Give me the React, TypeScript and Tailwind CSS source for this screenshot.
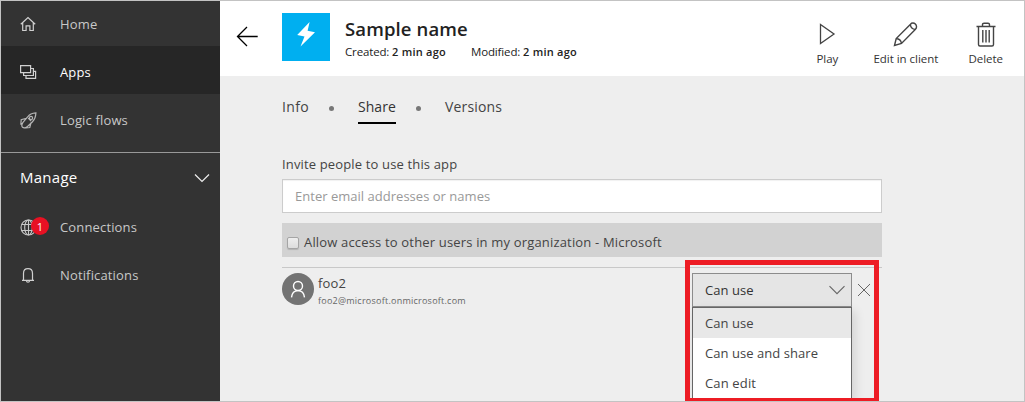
import type { ReactNode } from 'react';

function NavItem({ icon, label, className }: { icon: ReactNode; label: string; className: string }) {
  return (
    <a className={`flex shrink-0 items-center pl-[19px] ${className}`}>
      <span className="relative flex h-[18px] w-10 items-center">{icon}</span>
      <span>{label}</span>
    </a>
  );
}

const HomeIcon = () => (
  <svg width="16" height="16" viewBox="0 0 16 16" fill="none" stroke="#d0d0d0" strokeWidth="1.2">
    <path d="M.8 8.3 8 1.5l7.2 6.8M2.7 7v7.5h3.4V9.8h3.8v4.7h3.4V7" />
  </svg>
);

const AppsIcon = () => (
  <svg width="17" height="16" viewBox="0 0 17 16" fill="none" stroke="#d0d0d0" strokeWidth="1.2">
    <path d="M.6 1.6h10v7H.6zM3.6 8.8v2.7h9.8V4.5h-2.6M6 11.6v2.8h9.6V7.3h-2.2" />
  </svg>
);

const RocketIcon = () => (
  <svg width="17" height="17" viewBox="0 0 17 17" fill="none" stroke="#b5b5b5" strokeWidth="1.2">
    <path d="M15.900.900c-3.800.200-6.500 1.500-8.300 4.100L3 10.300c-1.200 1.800-1.400 4-.4 5 1.100 1 3.200.500 4.900-.8l5-4.800c2.300-2.200 3.200-4.800 3.400-8.800ZM6.500 6.200 1.200 7.800.900 12l1.700-.500M11 10.900l-1.200 4.600-4.200.400" />
    <circle cx="11" cy="5.900" r="1.600" />
    <path d="m8.200 6 2.900 3" />
  </svg>
);

const GlobeIcon = () => (
  <svg width="17" height="17" viewBox="0 0 17 17" fill="none" stroke="#c6c6c6" strokeWidth="1.100">
    <circle cx="8.500" cy="8.500" r="7.500" />
    <ellipse cx="8.500" cy="8.500" rx="3.800" ry="7.500" />
    <path d="M8.500 1v15M1.800 5.500h13.400M1.800 11.500h13.400" />
  </svg>
);

const BellIcon = () => (
  <svg width="16" height="17" viewBox="0 0 16 17" fill="none" stroke="#d0d0d0" strokeWidth="1.200">
    <path d="M2 13.300h12M3.500 13.300V6.500C3.500 3.500 5.200 1.700 8 1.700s4.500 1.800 4.500 4.800v6.800M6.300 13.500c.2 1.100.8 1.700 1.700 1.700s1.500-.6 1.700-1.700" />
  </svg>
);

function Action({ icon, label, className }: { icon: ReactNode; label: string; className: string }) {
  return (
    <button className={`flex flex-col items-center text-[11.500px] leading-4 tracking-[-0.020px] text-[#333] ${className}`}>
      <span className="flex h-[32px] items-center pb-[2px]">{icon}</span>
      <span className="whitespace-nowrap">{label}</span>
    </button>
  );
}

export default function App() {
  return (
    <div className="flex h-[402px] w-[1025px] overflow-hidden border border-[#c3c3c3] bg-[#eee] font-['Open_Sans','Noto_Sans',sans-serif] text-[13px] leading-5 tracking-[0.150px] text-[#444]">
      <nav className="flex w-[219px] shrink-0 flex-col bg-[#333] text-[#c8c8c8]">
        <NavItem icon={<HomeIcon />} label="Home" className="h-[45px] pt-px" />
        <NavItem icon={<AppsIcon />} label="Apps" className="h-12 bg-[#262626] pt-1 text-white" />
        <NavItem icon={<RocketIcon />} label="Logic flows" className="h-12 pt-1" />
        <div className="mt-[10px] flex h-[51px] shrink-0 items-center justify-between border-t border-[#999] pr-[10px] pb-[2px] pl-[19px] text-[15px] text-white">
          <span className="tracking-[0.260px]">Manage</span>
          <svg className="mt-[2px]" width="16" height="10" viewBox="0 0 16 10" fill="none" stroke="#eee" strokeWidth="1.200">
            <path d="m1 1.500 7 7 7-7" />
          </svg>
        </div>
        <NavItem
          icon={
            <>
              <GlobeIcon />
              <span className="absolute top-[-1px] left-[11px] flex size-[18px] items-center justify-center rounded-full bg-[#e81123] text-[11px] leading-none text-white">
                1
              </span>
            </>
          }
          label="Connections"
          className="h-12"
        />
        <NavItem icon={<BellIcon />} label="Notifications" className="h-12" />
      </nav>

      <main className="flex min-w-0 flex-1 flex-col">
        <header className="flex h-[75px] shrink-0 items-start bg-white pt-3 pl-4">
          <svg className="mt-[13px]" width="23" height="21" viewBox="0 0 23 21" fill="none" stroke="#000" strokeWidth="1.300">
            <path d="M21.700 10.500H1.500M11 1l-9.500 9.500L11 20" />
          </svg>
          <div className="ml-[23px] flex size-12 items-center justify-center bg-[#00aff0]">
            <svg width="48" height="48" viewBox="0 0 48 48" fill="#fff">
              <path d="M27.600 9 15.200 21.900l7.300 1.600L18.500 33.500 33 19.300l-7.400-1.600Z" />
            </svg>
          </div>
          <div className="ml-[15px] flex-1 text-[#222]">
            <h1 className="mt-1 text-[18.500px] leading-6 font-semibold tracking-[0.120px]">Sample name</h1>
            <p className="mt-[3px] flex gap-6 text-[11.500px] leading-4 tracking-[-0.150px]">
              <span className="w-[102px] whitespace-nowrap">
                Created: <span className="text-[11px] font-semibold tracking-[0.250px]">2 min ago</span>
              </span>
              <span className="whitespace-nowrap">
                Modified: <span className="text-[11px] font-semibold tracking-[0.250px]">2 min ago</span>
              </span>
            </p>
          </div>
          <div className="flex pt-[6px] pr-[21px]">
            <Action
              className="mr-[35px]"
              label="Play"
              icon={
                <svg width="17" height="22" viewBox="0 0 17 22" fill="none" stroke="#444" strokeWidth="1.300">
                  <path d="M1.500 1.500v19L15 11Z" />
                </svg>
              }
            />
            <Action
              className="mr-[30px]"
              label="Edit in client"
              icon={
                <svg width="26" height="26" viewBox="0 0 26 26" fill="none" stroke="#444" strokeWidth="1.400">
                  <path d="m1.500 24.500 1.700-7L17.500 3.200c2.900-3.600 8.300 1.700 5 5L8.500 22.500ZM3.200 17.500c2.700.2 4.800 2 5.300 5M17.300 3.500c.4 3 2 4.700 5 5" />
                </svg>
              }
            />
            <Action
              className=""
              label="Delete"
              icon={
                <svg width="20" height="25" viewBox="0 0 20 25" fill="none" stroke="#444" strokeWidth="1.400">
                  <path d="M.5 4.500h19M6.500 4V2.500Q6.500 1.200 8 1.200h4q1.500 0 1.500 1.300V4M2.500 4.500v18q0 1.500 1.500 1.500h12q1.500 0 1.500-1.500v-18M6.800 8v12.500M10 8v12.500M13.200 8v12.500" />
                </svg>
              }
            />
          </div>
        </header>

        <section className="flex w-[662px] flex-col pl-[62px]">
          <div className="mt-[21px] flex h-[27px] text-[14px] tracking-[0.150px]">
            <span className="w-[47px] tracking-[0.350px]">Info</span>
            <span className="mt-[9px] mr-6 size-[5px] rounded-full bg-[#777]" />
            <span className="h-[27px] w-[38px] border-b-2 border-black tracking-[0.050px] text-[#333]">Share</span>
            <span className="mt-[9px] mr-6 ml-5 size-[5px] rounded-full bg-[#777]" />
            <span>Versions</span>
          </div>

          <label className="mt-[30px]">Invite people to use this app</label>
          <input
            className="mt-[5px] h-[34px] w-[600px] border border-[#ccc] bg-white px-3 tracking-[0.020px] shadow-[inset_0_1px_1px_rgba(0,0,0,0.060)] outline-none placeholder:text-[#999]"
            placeholder="Enter email addresses or names"
          />
          <div className="mt-[10px] flex h-[34px] w-[600px] items-center bg-[#d2d2d2] pb-px pl-[5px]">
            <span className="mt-[6px] mr-[5px] size-3 rounded-[2px] border border-[#a5a5a5] bg-linear-to-b from-[#eee] to-[#ddd] shadow-[0_1px_1px_rgba(0,0,0,0.150)]" />
            <span className="pt-[5px] tracking-[0.170px]">Allow access to other users in my organization - Microsoft</span>
          </div>

          <div className="relative mt-[10px] flex w-[600px] border-t border-[#c8c8c8] pt-[5px]">
            <svg width="32" height="32" viewBox="0 0 32 32" fill="none" stroke="#fff" strokeWidth="1.400">
              <circle cx="16" cy="16" r="16" fill="#737373" stroke="none" />
              <circle cx="16" cy="13" r="4.500" />
              <path d="M9.500 24.300c.5-4.300 2.900-6.700 6.500-6.700s6 2.400 6.500 6.700" />
            </svg>
            <div className="ml-1 w-[374px]">
              <div className="leading-5">foo2</div>
              <div className="pt-px text-[9px] leading-[14px] tracking-[0.240px] text-[#666]">foo2@microsoft.onmicrosoft.com</div>
            </div>
            <div className="w-40">
              <button className="flex h-[34px] w-full items-center justify-between border border-[#8c8c8c] bg-[#e5e5e5] pr-[6px] pl-3 tracking-[0.050px] text-[#333]">
                Can use
                <svg width="16" height="10" viewBox="0 0 16 10" fill="none" stroke="#666" strokeWidth="1.100">
                  <path d="m.5 1.200 7.500 7.500 7.500-7.500" />
                </svg>
              </button>
              <ul className="h-[91px] border-x border-t border-[#666] bg-white shadow-[3px_4px_10px_rgba(0,0,0,0.120)]">
                <li className="flex h-[30px] items-center bg-[#e8e8e8] pl-3 tracking-[0.050px]">Can use</li>
                <li className="flex h-[30px] items-center pl-3 tracking-[0.050px]">Can use and share</li>
                <li className="flex h-[30px] items-center pl-3">Can edit</li>
              </ul>
            </div>
            <svg className="mt-[10px] ml-[5px]" width="14" height="14" viewBox="0 0 14 14" fill="none" stroke="#666" strokeWidth="1">
              <path d="m1 1 12 12M13 1 1 13" />
            </svg>
            <div className="absolute top-[-8px] left-[403px] h-[141px] w-[194px] border-x-5 border-t-5 border-b-3 border-[#ed1c24]" />
          </div>
        </section>
      </main>
    </div>
  );
}
